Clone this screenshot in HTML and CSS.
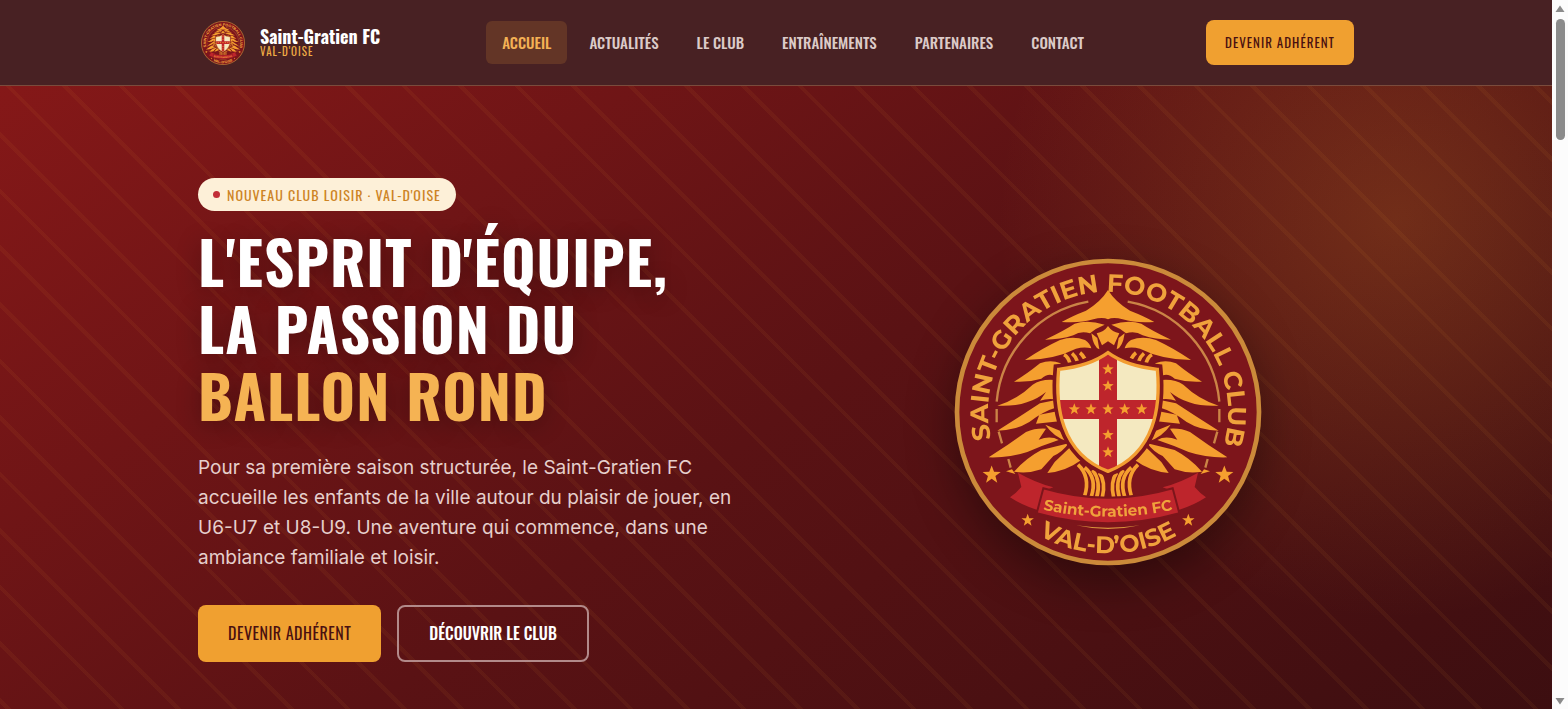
FILE: index.html
```html
<!DOCTYPE html>
<html lang="fr">
<head>
    <meta charset="UTF-8">
    <meta name="viewport" content="width=device-width, initial-scale=1.0">
    <title>Saint-Gratien FC</title>
    <link rel="stylesheet" href="styles.css">
</head>
<body>
    <div class="page">
        <header class="header">
            <div class="container header-inner">
                <a class="brand" href="#">
                    <svg class="brand-logo" viewBox="0 0 924 924" aria-hidden="true"><use href="#crest"/></svg>
                    <span class="brand-text">
                        <span class="brand-name">Saint-Gratien FC</span>
                        <span class="brand-place">VAL-D'OISE</span>
                    </span>
                </a>
                <nav class="nav">
                    <a class="nav-link active" href="#">ACCUEIL</a>
                    <a class="nav-link" href="#">ACTUALITÉS</a>
                    <a class="nav-link" href="#">LE CLUB</a>
                    <a class="nav-link" href="#">ENTRAÎNEMENTS</a>
                    <a class="nav-link" href="#">PARTENAIRES</a>
                    <a class="nav-link" href="#">CONTACT</a>
                </nav>
                <a class="btn btn-gold btn-small" href="#">DEVENIR ADHÉRENT</a>
            </div>
        </header>
        <main class="hero">
            <div class="container hero-inner">
                <div class="hero-content">
                    <span class="badge">NOUVEAU CLUB LOISIR · VAL-D'OISE</span>
                    <h1>L'ESPRIT D'ÉQUIPE,<br>LA PASSION DU<br><span class="gold">BALLON ROND</span></h1>
                    <p class="lead">Pour sa première saison structurée, le Saint-Gratien FC accueille les enfants de la ville autour du plaisir de jouer, en U6-U7 et U8-U9. Une aventure qui commence, dans une ambiance familiale et loisir.</p>
                    <div class="actions">
                        <a class="btn btn-gold" href="#">DEVENIR ADHÉRENT</a>
                        <a class="btn btn-outline" href="#">DÉCOUVRIR LE CLUB</a>
                    </div>
                </div>
                <svg class="hero-logo" viewBox="0 0 924 924" role="img" aria-label="Saint-Gratien Football Club">
                    <defs>
                        <path id="arc-top" d="M462,822 A360,360 0 1 1 463,822"/>
                        <path id="arc-bottom" d="M38,462 A424,424 0 0 0 886,462"/>
                        <path id="arc-ribbon" d="M262,754 Q462,798 662,754"/>
                        <path id="shield" d="M462,284 C420,315 370,328 314,334 C304,440 318,585 462,640 C606,585 620,440 610,334 C554,328 504,315 462,284 Z"/>
                        <path id="star" d="M0,-18 L4.500,-6 L17,-5.500 L7,2 L10.500,14.500 L0,7 L-10.500,14.500 L-7,2 L-17,-5.500 L-4.500,-6 Z"/>
                        <clipPath id="shield-clip"><use href="#shield"/></clipPath>
                        <g id="half">
                            <!-- inner ring -->
                            <path class="ring" d="M403,131 A335,335 0 0 0 128,431"/>
                            <path class="ring" d="M128,453 V493 M134,521 L144,556 M163,603 L170,629"/>
                            <!-- branches -->
                            <g class="leaf">
                                <path d="M462,96 Q440,132 396,158 Q352,175 323,192 Q380,196 418,184 Q446,176 462,184 Z"/>
                                <path d="M273,245 Q330,218 362,197 Q400,184 452,200 Q426,210 408,226 Q380,218 358,232 Q320,245 273,245 Z"/>
                                <path d="M213,306 Q266,270 318,246 Q358,232 393,246 Q408,256 412,271 Q390,266 366,272 Q300,305 213,306 Z"/>
                                <path d="M180,371 Q216,350 258,316 Q290,304 320,316 L318,332 L306,356 Q284,342 262,362 Q222,374 180,371 Z"/>
                                <path d="M130,443 Q190,424 236,380 Q262,362 303,366 L304,424 Q280,420 258,428 L276,402 Q220,448 130,443 Z"/>
                                <path d="M130,518 Q198,476 258,436 L306,426 L309,448 Q268,460 226,492 Q184,518 130,518 Z"/>
                                <path d="M256,470 L310,460 L316,490 L246,497 Z"/>
                                <path d="M104,598 Q158,564 216,522 Q244,510 276,512 L254,545 Q290,532 314,546 Q266,562 220,582 Q166,600 104,598 Z"/>
                                <path d="M274,500 L318,518 L340,550 Q298,536 274,500 Z"/>
                                <path d="M180,641 Q216,600 262,576 L344,556 Q326,582 298,594 L262,634 Q222,648 180,641 Z"/>
                                <path d="M346,570 L382,606 Q336,640 280,645 L302,612 Z"/>
                                <path d="M156,640 L174,634 L184,648 Z"/>
                                <path d="M412,226 L430,240 L436,274 Q418,268 412,226 Z"/>
                            </g>
                            <path class="twig" d="M330,290 Q342,296 348,316 M354,286 Q364,294 370,310 M378,284 Q386,290 392,302"/>
                            <!-- trunk -->
                            <path class="trunk" d="M372,620 Q410,656 392,714 M392,628 Q430,660 412,716 M416,636 Q442,670 428,718 M436,644 Q456,672 445,718"/>
                            <!-- ribbon tail -->
                            <path class="tail" d="M192,644 Q240,672 298,688 L270,698 L250,756 Q204,742 168,718 Q186,706 202,687 Z"/>
                            <use class="gold-fill" href="#star" transform="translate(113 651) scale(1.600)"/>
                            <use class="gold-fill" href="#star" transform="translate(221 787) scale(1.100)"/>
                        </g>
                        <g id="crest">
                            <circle cx="462" cy="462" r="453" fill="#7d151b" stroke="#cb8a3a" stroke-width="14"/>
                            <use href="#half"/>
                            <use href="#half" transform="translate(924 0) scale(-1 1)"/>
                            <path class="gold-fill" d="M462,204 Q474,222 496,226 L480,262 L462,250 L444,262 L428,226 Q450,222 462,204 Z"/>
                            <use href="#shield" fill="#7d151b" stroke="#7d151b" stroke-width="32"/>
                            <use href="#shield" fill="#f4e9c0"/>
                            <g clip-path="url(#shield-clip)">
                                <path d="M435,270 H489 V650 H435 Z M300,426 H630 V483 H300 Z" fill="#be252c"/>
                            </g>
                            <use href="#shield" fill="none" stroke="#f39d31" stroke-width="10"/>
                            <g class="gold-fill">
                                <use href="#star" x="462" y="334"/>
                                <use href="#star" x="462" y="384"/>
                                <use href="#star" x="361" y="454"/>
                                <use href="#star" x="411" y="454"/>
                                <use href="#star" x="462" y="454"/>
                                <use href="#star" x="512" y="454"/>
                                <use href="#star" x="563" y="454"/>
                                <use href="#star" x="462" y="531"/>
                                <use href="#star" x="462" y="583"/>
                            </g>
                            <path d="M268,691 Q462,748 656,691 L676,766 Q462,826 248,766 Z" fill="#be252c" stroke="#7d151b" stroke-width="6"/>
                            <path d="M366,802 Q462,824 558,802 Q462,816 366,802 Z" fill="#d8933d"/>
                            <text class="crest-text"><textPath href="#arc-top" startOffset="50.4%">SAINT-GRATIEN FOOTBALL CLUB</textPath></text>
                            <text class="crest-text place"><textPath href="#arc-bottom" startOffset="50%">VAL-D’OISE</textPath></text>
                            <text class="ribbon-text"><textPath href="#arc-ribbon" startOffset="50%">Saint-Gratien FC</textPath></text>
                        </g>
                    </defs>
                    <use href="#crest"/>
                </svg>
            </div>
        </main>
    </div>
    <div class="scrollbar" aria-hidden="true">
        <svg viewBox="0 0 10 8"><path d="M5,0.500 L9.500,7 H0.500 Z"/></svg>
        <div class="track"><div class="thumb"></div></div>
        <svg viewBox="0 0 10 8"><path d="M5,7.500 L9.500,1 H0.500 Z"/></svg>
    </div>
</body>
</html>
```
FILE: styles.css
```css
* {
    box-sizing: border-box;
}
body {
    margin: 0;
    display: grid;
    grid-template-columns: 1fr 16px;
    height: 100vh;
    overflow: hidden;
    background: #3d0f10;
    color: white;
    font-family: Inter, sans-serif;
}
a {
    color: inherit;
    text-decoration: none;
}
.page {
    height: 100vh;
    overflow: hidden;
}
.container {
    width: 100%;
    max-width: 1200px;
    margin: 0 auto;
    padding: 0 22px;
}

/* header */
.header {
    background: #482123;
    border-bottom: 1px solid #7a4b3c;
    padding: 20px 0;
}
.header-inner {
    display: flex;
    align-items: center;
    justify-content: space-between;
}
.brand {
    display: flex;
    align-items: center;
    gap: 12px;
    font-family: Oswald, sans-serif;
}
.brand-logo {
    width: 50px;
    height: 44px;
}
.brand-text {
    display: flex;
    flex-direction: column;
}
.brand-name {
    font-size: 18px;
    font-weight: 700;
    line-height: 17px;
}
.brand-place {
    color: #f0ac45;
    font-size: 11px;
    letter-spacing: 1px;
    line-height: 13px;
}
.nav {
    display: flex;
    gap: 6px;
    font-family: Oswald, sans-serif;
    font-size: 15px;
    font-weight: 500;
    line-height: 23px;
}
.nav-link {
    color: #dccbc8;
    padding: 10px 16px;
    border-radius: 6px;
}
.nav-link.active {
    background: #633526;
    color: #f4b155;
}

/* buttons */
.btn {
    padding: 16px 30px;
    border-radius: 8px;
    font-family: Oswald, sans-serif;
    font-size: 16px;
    line-height: 25px;
}
.btn-gold {
    background: #f0a030;
    color: #4a1010;
    letter-spacing: 0.03em;
}
.btn-outline {
    border: 2px solid #b28a8a;
    padding: 14px 30px;
    font-weight: 500;
}
.btn-small {
    padding: 12px 19px;
    font-size: 13px;
    letter-spacing: 1px;
    line-height: 21px;
}

/* hero */
.hero {
    padding: 92px 0;
    background:
        repeating-linear-gradient(45deg, transparent 0 36px, rgba(240, 160, 48, 0.06) 36px 40px),
        radial-gradient(circle at 90% 20%, rgba(240, 160, 48, 0.2), transparent 400px),
        linear-gradient(145deg, #851818 0%, #5a1214 50%, #3b0e10 100%);
}
.hero-inner {
    display: grid;
    grid-template-columns: 5fr 4fr;
    gap: 48px;
    align-items: center;
}
.badge {
    display: inline-flex;
    align-items: center;
    gap: 7px;
    padding: 6px 15px;
    border-radius: 17px;
    background: #fdf0d8;
    color: #cd8425;
    font-family: Oswald, sans-serif;
    font-size: 14px;
    letter-spacing: 1px;
    line-height: 21px;
}
.badge::before {
    content: "";
    width: 7px;
    height: 7px;
    border-radius: 50%;
    background: #c22f38;
}
h1 {
    margin: 16px 0 25px;
    font-family: Oswald, sans-serif;
    font-size: 59px;
    font-weight: 700;
    letter-spacing: 1px;
    line-height: 67px;
    text-shadow: 0 4px 24px rgba(0, 0, 0, 0.3);
}
.gold {
    color: #f5b353;
}
.lead {
    max-width: 540px;
    margin: 0 0 32px;
    color: #e6cfcc;
    font-size: 19px;
    line-height: 30px;
}
.actions {
    display: flex;
    gap: 16px;
}
.hero-logo {
    width: 308px;
    margin: 0 auto 16px;
    overflow: visible;
    filter: drop-shadow(0 16px 24px rgba(0, 0, 0, 0.4));
}

/* crest */
.ring {
    fill: none;
    stroke: #cb8446;
    stroke-width: 7px;
}
.leaf, .gold-fill {
    fill: #f59f2f;
}
.twig, .trunk {
    fill: none;
    stroke: #f59f2f;
    stroke-width: 11px;
}
.tail {
    fill: #be252c;
}
.crest-text {
    fill: #f0a23c;
    font-family: Montserrat, Inter, sans-serif;
    font-size: 76px;
    font-weight: 700;
    text-anchor: middle;
}
.crest-text.place {
    font-size: 72px;
}
.ribbon-text {
    fill: #f0a23c;
    font-family: Montserrat, Inter, sans-serif;
    font-size: 46px;
    font-weight: 700;
    text-anchor: middle;
}

/* scrollbar */
.scrollbar {
    display: flex;
    flex-direction: column;
    align-items: center;
    gap: 6px;
    padding: 5px 0 4px;
    background: #fcfcfc;
}
.scrollbar svg {
    width: 10px;
    height: 8px;
    fill: #8b8b8b;
}
.track {
    flex: 1;
}
.thumb {
    width: 9px;
    height: 121px;
    border-radius: 5px;
    background: #8b8b8b;
}
```
